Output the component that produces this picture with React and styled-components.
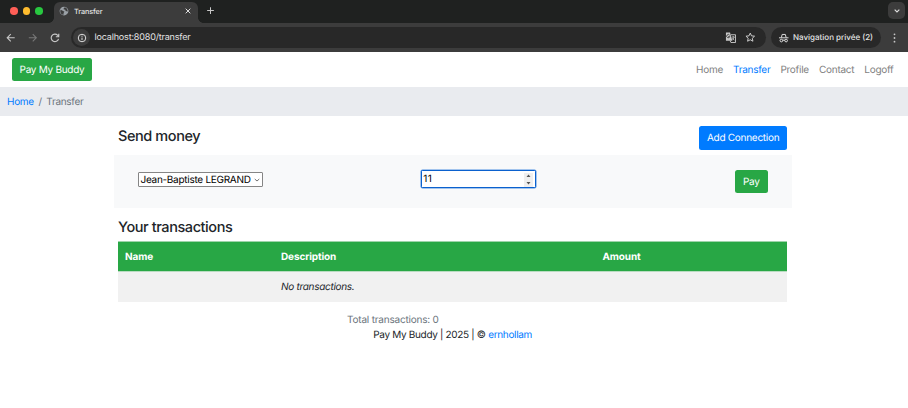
import React from "react";
import styled, { createGlobalStyle } from "styled-components";

const GlobalStyle = createGlobalStyle`
  * { box-sizing: border-box; }
  body { margin: 0; background: #fff; color: #212529; font: 10px/15px Inter, sans-serif; overflow: hidden; text-rendering: geometricPrecision; }
  a { color: inherit; text-decoration: none; }
  svg { display: block; flex: none; }
`;

const Window = styled.div`
  width: 908px;
  height: 408px;
  background: #fff;
`;
const TabBar = styled.div`
  height: 23px;
  display: flex;
  align-items: flex-start;
  background: #1f2120;
`;
const Lights = styled.div`
  width: 54px;
  height: 22px;
  padding-left: 10px;
  display: flex;
  align-items: center;
  gap: 5px;
`;
const Light = styled.span`
  width: 7.5px;
  height: 7.5px;
  border-radius: 50%;
  background: ${(p) => p.$color};
`;
const Tab = styled.div`
  position: relative;
  width: 144px;
  height: 21px;
  margin-top: 2px;
  padding: 0 6px 3px 5px;
  display: flex;
  align-items: center;
  color: #e3e3e3;
  background: #3c3c3c;
  border-radius: 6px 6px 0 0;
  font-size: 7.3px;
  &::before, &::after {
    content: "";
    position: absolute;
    bottom: 0;
    width: 5px;
    height: 5px;
  }
  &::before { left: -5px; background: radial-gradient(circle at 0 0, transparent 4.5px, #3c3c3c 5px); }
  &::after { right: -5px; background: radial-gradient(circle at 100% 0, transparent 4.5px, #3c3c3c 5px); }
`;
const TabTitle = styled.span`
  flex: 1;
  margin-left: 5px;
  font-weight: 500;
  letter-spacing: -0.1px;
`;
const NewTab = styled.div`
  margin: 6px auto 0 8px;
`;
const TabSearch = styled.div`
  width: 17px;
  height: 17px;
  margin: 2px 3px 0 0;
  display: grid;
  place-items: center;
  border-radius: 5px;
  background: #3c3c3c;
`;
const Toolbar = styled.div`
  height: 29px;
  display: flex;
  align-items: center;
  padding: 0 9px 0 6px;
  background: #3c3c3c;
`;
const NavIcons = styled.div`
  width: 65px;
  display: flex;
  gap: 12.5px;
`;
const AddressBar = styled.div`
  width: 695px;
  height: 21px;
  padding: 0 10.5px 0 2px;
  display: flex;
  align-items: center;
  border-radius: 11px;
  background: #282828;
  color: #e3e3e3;
  font-size: 9px;
`;
const SiteInfo = styled.span`
  width: 17px;
  height: 17px;
  margin-right: 4.5px;
  display: grid;
  place-items: center;
  border-radius: 50%;
  background: #3c3c3c;
`;
const Url = styled.span`
  flex: 1;
  letter-spacing: -0.17px;
`;
const AddressActions = styled.span`
  display: flex;
  align-items: center;
  gap: 9px;
`;
const Incognito = styled.div`
  width: 110px;
  height: 21px;
  margin: 0 12px 0 5px;
  padding-left: 8px;
  display: flex;
  align-items: center;
  gap: 4.5px;
  border-radius: 11px;
  background: #282828;
  color: #e3e3e3;
  font-size: 8px;
  font-weight: 500;
  white-space: nowrap;
`;
const Navbar = styled.header`
  height: 35px;
  padding: 0 14.5px 0 12px;
  display: flex;
  align-items: center;
  justify-content: space-between;
`;
const Button = styled.button`
  width: ${(p) => p.$width}px;
  height: ${(p) => p.$height || 23.5}px;
  padding: 1px 0 0;
  border: 0;
  border-radius: 2.5px;
  background: ${(p) => (p.$primary ? "#007bff" : "#28a745")};
  color: #fff;
  font: 10px/15px Inter, sans-serif;
  letter-spacing: -0.27px;
  text-rendering: inherit;
  white-space: nowrap;
`;
const AddButton = styled(Button)`
  padding-top: 2px;
`;
const Menu = styled.nav`
  display: flex;
  gap: 10px;
  padding-top: 1px;
  letter-spacing: -0.26px;
`;
const MenuLink = styled.a`
  && { color: ${(p) => (p.$active ? "#007bff" : "#7f7f7f")}; }
`;
const Breadcrumb = styled.div`
  height: 29.3px;
  padding: 1px 0 0 7px;
  display: flex;
  align-items: center;
  gap: 4.6px;
  background: #e9ebef;
  color: #6c757d;
  letter-spacing: -0.3px;
`;
const Link = styled.a`
  && { color: #007bff; }
`;
const Container = styled.main`
  width: 669.3px;
  margin-left: 118px;
  letter-spacing: -0.28px;
`;
const TitleRow = styled.div`
  height: 38.5px;
  padding-top: 9.7px;
  display: flex;
  justify-content: space-between;
`;
const Heading = styled.h1`
  margin: 0;
  font-size: 14.5px;
  line-height: 21px;
  font-weight: 500;
  letter-spacing: -0.42px;
`;
const TransferForm = styled.section`
  height: 53px;
  margin: 0 -4.5px;
  padding: 15px 24px 0 24px;
  display: grid;
  grid-template-columns: 284px 1fr 33px;
  align-items: start;
  background: #f8f9fa;
`;
const Recipient = styled.div`
  width: 125px;
  height: 15px;
  margin-top: 1.8px;
  padding: 2px 2px 0 2px;
  display: flex;
  align-items: center;
  justify-content: space-between;
  border: 1px solid #858585;
  border-radius: 1px;
  background: #fff;
  color: #000;
  white-space: nowrap;
`;
const Amount = styled.div`
  width: 115px;
  height: 18.5px;
  margin-left: -0.2px;
  padding: 1px 2px 0 1px;
  display: flex;
  align-items: center;
  justify-content: space-between;
  border: 1px solid #0b61ce;
  border-radius: 1.5px;
  box-shadow: 0 0 0 0.5px #4c8fe0;
  background: #fff;
  color: #000;
  letter-spacing: 0.3px;
`;
const Spinner = styled.span`
  width: 9px;
  height: 14px;
  display: grid;
  place-items: center;
  background: #efefef;
`;
const TransactionsHeading = styled(Heading)`
  margin-top: 9px;
  height: 24px;
`;
const Table = styled.div`
  width: 669.3px;
`;
const Row = styled.div`
  height: ${(p) => (p.$head ? 31 : 30)}px;
  padding: 2px 0 0 7px;
  display: grid;
  grid-template-columns: 156px 321.5px 1fr;
  align-items: center;
  background: ${(p) => (p.$head ? "#28a745" : "#f1f1f1")};
  color: ${(p) => (p.$head ? "#fff" : "#212529")};
  font-weight: ${(p) => (p.$head ? 700 : 400)};
  letter-spacing: ${(p) => (p.$head ? -0.13 : -0.3)}px;
  border-top: ${(p) => (p.$head ? "0.5px solid #9fd4aa" : "0")};
  border-bottom: ${(p) => (p.$head ? "1px solid #b9dcc1" : "0")};
`;
const Empty = styled.em`
  grid-column: 2;
`;
const Total = styled.div`
  margin: 11.5px 0 0 229px;
  color: #6c757d;
  letter-spacing: -0.2px;
`;
const Footer = styled.footer`
  text-align: center;
  letter-spacing: -0.32px;
`;

const Stroke = ({ size, color = "#c7c7c7", width = 2, children }) => (
  <svg width={size} height={size} viewBox="0 0 24 24" fill="none" stroke={color} strokeWidth={width}>
    {children}
  </svg>
);

const Globe = () => (
  <svg width="10" height="10" viewBox="0 0 24 24">
    <circle cx="12" cy="12" r="10.5" fill="#9aa0a6" />
    <path d="M4 9l6 3 3 2-2 3v4C6 21 3 17 3 12zM14 3l-3 3v2l4 1 1 3 5 1c0-5-3-9-7-10z" fill="#3c3c3c" />
  </svg>
);

const Translate = () => (
  <svg width="11" height="11" viewBox="0 0 24 24" fill="none" stroke="#d0d0d0">
    <path d="M2 1h9l5 18H2z" fill="#c7c7c7" stroke="none" />
    <path d="M13 6h10v17H13l-2-4" strokeWidth="2" />
    <path d="M10 7a3.5 3.5 0 1 0 .5 3H7" stroke="#333" strokeWidth="1.8" />
    <path d="M15 11h6M18 9v2M20 11c-1 3-2 5-4 6M16 13l4 5" strokeWidth="1.7" />
  </svg>
);

const Spy = () => (
  <svg width="9.5" height="10" viewBox="0 0 24 24" fill="none" stroke="#e3e3e3" strokeWidth="2.4">
    <path d="M0 11.500h24M6 11l2-8h8l2 8" />
    <circle cx="6" cy="18.500" r="3.300" />
    <circle cx="18" cy="18.500" r="3.300" />
    <path d="M9 17.500h6" />
  </svg>
);

export default function App() {
  return (
    <Window>
      <GlobalStyle />
      <TabBar>
        <Lights>
          <Light $color="#ff5f57" />
          <Light $color="#febc2e" />
          <Light $color="#28c840" />
        </Lights>
        <Tab>
          <Globe />
          <TabTitle>Transfer</TabTitle>
          <Stroke size={8} width={3} color="#dedede"><path d="M5 5l14 14M19 5L5 19" /></Stroke>
        </Tab>
        <NewTab><Stroke size={9} width={2.7}><path d="M12 3v18M3 12h18" /></Stroke></NewTab>
        <TabSearch><Stroke size={8} width={3.5} color="#dedede"><path d="M5 8l7 7 7-7" /></Stroke></TabSearch>
      </TabBar>
      <Toolbar>
        <NavIcons>
          <Stroke size={9.5} width={2.7}><path d="M22 12H4M12 3l-9 9 9 9" /></Stroke>
          <Stroke size={9.5} width={2.7} color="#777"><path d="M2 12h18M12 3l9 9-9 9" /></Stroke>
          <Stroke size={10} width={2.8}><path d="M20.500 14a9 9 0 1 1-2-8.500l3 3M21 2v7h-7" /></Stroke>
        </NavIcons>
        <AddressBar>
          <SiteInfo>
            <Stroke size={10} width={2.4} color="#dedede"><circle cx="12" cy="12" r="9" /><path d="M12 11v6M12 6.500v2.500" /></Stroke>
          </SiteInfo>
          <Url>localhost:8080/transfer</Url>
          <AddressActions>
            <Translate />
            <Stroke size={10.5} width={2.2} color="#d0d0d0"><path d="M12 2.5l2.9 6.3 6.9.8-5.1 4.7 1.4 6.8-6.1-3.4-6.1 3.4 1.4-6.8-5.1-4.7 6.9-.8z" /></Stroke>
          </AddressActions>
        </AddressBar>
        <Incognito><Spy />Navigation privée (2)</Incognito>
        <svg width="3" height="10" viewBox="0 0 3 10" fill="#c7c7c7">
          <circle cx="1.5" cy="1.3" r=".9" /><circle cx="1.5" cy="5" r=".9" /><circle cx="1.5" cy="8.7" r=".9" />
        </svg>
      </Toolbar>
      <Navbar>
        <Button $width={80}>Pay My Buddy</Button>
        <Menu>
          <MenuLink>Home</MenuLink>
          <MenuLink $active>Transfer</MenuLink>
          <MenuLink>Profile</MenuLink>
          <MenuLink>Contact</MenuLink>
          <MenuLink>Logoff</MenuLink>
        </Menu>
      </Navbar>
      <Breadcrumb><Link>Home</Link><span>/</span><span>Transfer</span></Breadcrumb>
      <Container>
        <TitleRow>
          <Heading>Send money</Heading>
          <AddButton $primary $width={88.3} $height={24}>Add Connection</AddButton>
        </TitleRow>
        <TransferForm>
          <Recipient>
            Jean-Baptiste LEGRAND
            <Stroke size={6} width={3} color="#444"><path d="M3 8l9 8 9-8" /></Stroke>
          </Recipient>
          <Amount>
            11
            <Spinner>
              <svg width="5" height="11" viewBox="0 0 5 11" fill="#555"><path d="M.5 3L2.5.5 4.5 3zM.5 8L2.5 10.5 4.5 8z" /></svg>
            </Spinner>
          </Amount>
          <Button $width={33}>Pay</Button>
        </TransferForm>
        <TransactionsHeading as="h2">Your transactions</TransactionsHeading>
        <Table>
          <Row $head><span>Name</span><span>Description</span><span>Amount</span></Row>
          <Row><Empty>No transactions.</Empty></Row>
        </Table>
        <Total>Total transactions: 0</Total>
        <Footer>Pay My Buddy | 2025 | © <Link>ernhollam</Link></Footer>
      </Container>
    </Window>
  );
}
